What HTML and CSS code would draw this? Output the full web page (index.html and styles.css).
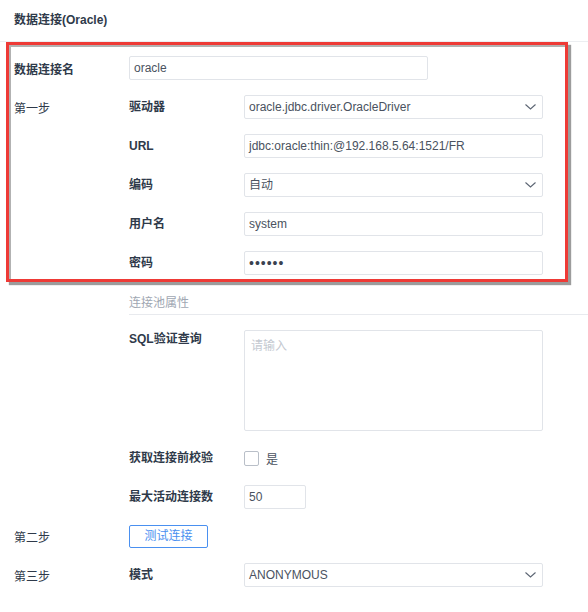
FILE: index.html
```html
<!DOCTYPE html>
<html>
<head>
    <title>数据连接(Oracle)</title>
    <link rel="stylesheet" href="styles.css">
</head>
<body>
    <div class="header">数据连接(Oracle)</div>

    <div class="frame">
        <div class="row">
            <div class="name-label">数据连接名</div>
            <div class="field">oracle</div>
        </div>
        <div class="row">
            <div class="step">第一步</div>
            <div class="label">驱动器</div>
            <div class="field select">
                <span>oracle.jdbc.driver.OracleDriver</span>
                <svg class="chevron" width="11" height="6" viewBox="0 0 11 6"><path d="M0.5 0.5 L5.5 5 L10.5 0.5" fill="none" stroke="#5c6573" stroke-width="1.1"/></svg>
            </div>
        </div>
        <div class="row">
            <div class="step"></div>
            <div class="label">URL</div>
            <div class="field">jdbc:oracle:thin:@192.168.5.64:1521/FR</div>
        </div>
        <div class="row">
            <div class="step"></div>
            <div class="label">编码</div>
            <div class="field select">
                <span>自动</span>
                <svg class="chevron" width="11" height="6" viewBox="0 0 11 6"><path d="M0.5 0.5 L5.5 5 L10.5 0.5" fill="none" stroke="#5c6573" stroke-width="1.1"/></svg>
            </div>
        </div>
        <div class="row">
            <div class="step"></div>
            <div class="label">用户名</div>
            <div class="field">system</div>
        </div>
        <div class="row">
            <div class="step"></div>
            <div class="label">密码</div>
            <div class="field password">••••••</div>
        </div>
    </div>

    <div class="content">
        <div class="section-title">连接池属性</div>

        <div class="row top">
            <div class="step"></div>
            <div class="label tall">SQL验证查询</div>
            <div class="field textarea"><span class="placeholder">请输入</span></div>
        </div>
        <div class="row">
            <div class="step"></div>
            <div class="label">获取连接前校验</div>
            <div class="check">
                <span class="box"></span>
                <span>是</span>
            </div>
        </div>
        <div class="row">
            <div class="step"></div>
            <div class="label">最大活动连接数</div>
            <div class="field small">50</div>
        </div>
        <div class="row">
            <div class="step">第二步</div>
            <div class="btn">测试连接</div>
        </div>
        <div class="row">
            <div class="step">第三步</div>
            <div class="label">模式</div>
            <div class="field select">
                <span>ANONYMOUS</span>
                <svg class="chevron" width="11" height="6" viewBox="0 0 11 6"><path d="M0.5 0.5 L5.5 5 L10.5 0.5" fill="none" stroke="#5c6573" stroke-width="1.1"/></svg>
            </div>
        </div>
    </div>
</body>
</html>
```

FILE: styles.css
```css
:root {
    --text-color: #2f3a4a;
    --field-text: #4a5260;
    --border-color: #e1e4e9;
    --muted-color: #a0a7b2;
    --primary-color: #4a90f0;
    --mark-color: #ee3a36;
}

body {
    font-family: "Liberation Sans", "Noto Sans CJK SC", sans-serif;
    font-size: 12px;
    margin: 0;
    padding: 0;
    background: #ffffff;
    color: var(--text-color);
    width: 588px;
    height: 612px;
    overflow: hidden;
}

.header {
    height: 41px;
    line-height: 41px;
    padding-left: 14px;
    font-weight: bold;
    border-bottom: 1px solid #eceef1;
}

/* red mark drawn around the first block */
.frame {
    margin-left: 6px;
    width: 562px;
    box-sizing: border-box;
    border: 3px solid var(--mark-color);
    padding: 11px 0 4px 5px;
    display: flex;
    flex-direction: column;
    gap: 15px;
    box-shadow: inset 2px 2px 0 #b2b2b2, 3px 3px 1px #9c9c9c;
}

.content {
    padding-left: 14px;
    display: flex;
    flex-direction: column;
    gap: 15px;
}

.row {
    display: flex;
    align-items: center;
    height: 24px;
}

.row.top {
    align-items: flex-start;
    height: auto;
}

.name-label {
    width: 115px;
    font-weight: bold;
}

.step {
    width: 115px;
    flex-shrink: 0;
}

.label {
    width: 115px;
    flex-shrink: 0;
    font-weight: bold;
    line-height: 24px;
}

.label.tall {
    line-height: 18px;
}

.field {
    width: 299px;
    height: 24px;
    box-sizing: border-box;
    border: 1px solid var(--border-color);
    border-radius: 2px;
    padding: 0 4px;
    line-height: 22px;
    color: var(--field-text);
    white-space: nowrap;
}

.field.select {
    display: flex;
    justify-content: space-between;
    align-items: center;
}

.chevron {
    margin-right: 2px;
}

.field.password {
    font-size: 14px;
    letter-spacing: 1px;
    color: #3a4250;
}

.field.textarea {
    height: 101px;
    padding: 4px 6px;
}

.field.small {
    width: 62px;
}

.placeholder {
    color: #c4c9d1;
}

.section-title {
    margin-top: 12px;
    margin-left: 115px;
    line-height: 18px;
    padding-bottom: 2px;
    color: var(--muted-color);
    border-bottom: 1px solid #e8eaee;
}

.check {
    display: flex;
    align-items: center;
    gap: 7px;
    color: var(--field-text);
}

.check .box {
    width: 13px;
    height: 13px;
    border: 1px solid #b9bfc8;
    border-radius: 2px;
}

.btn {
    width: 79px;
    height: 23px;
    box-sizing: border-box;
    line-height: 21px;
    text-align: center;
    background: #ffffff;
    border: 1px solid var(--primary-color);
    border-radius: 2px;
    color: var(--primary-color);
}
```
